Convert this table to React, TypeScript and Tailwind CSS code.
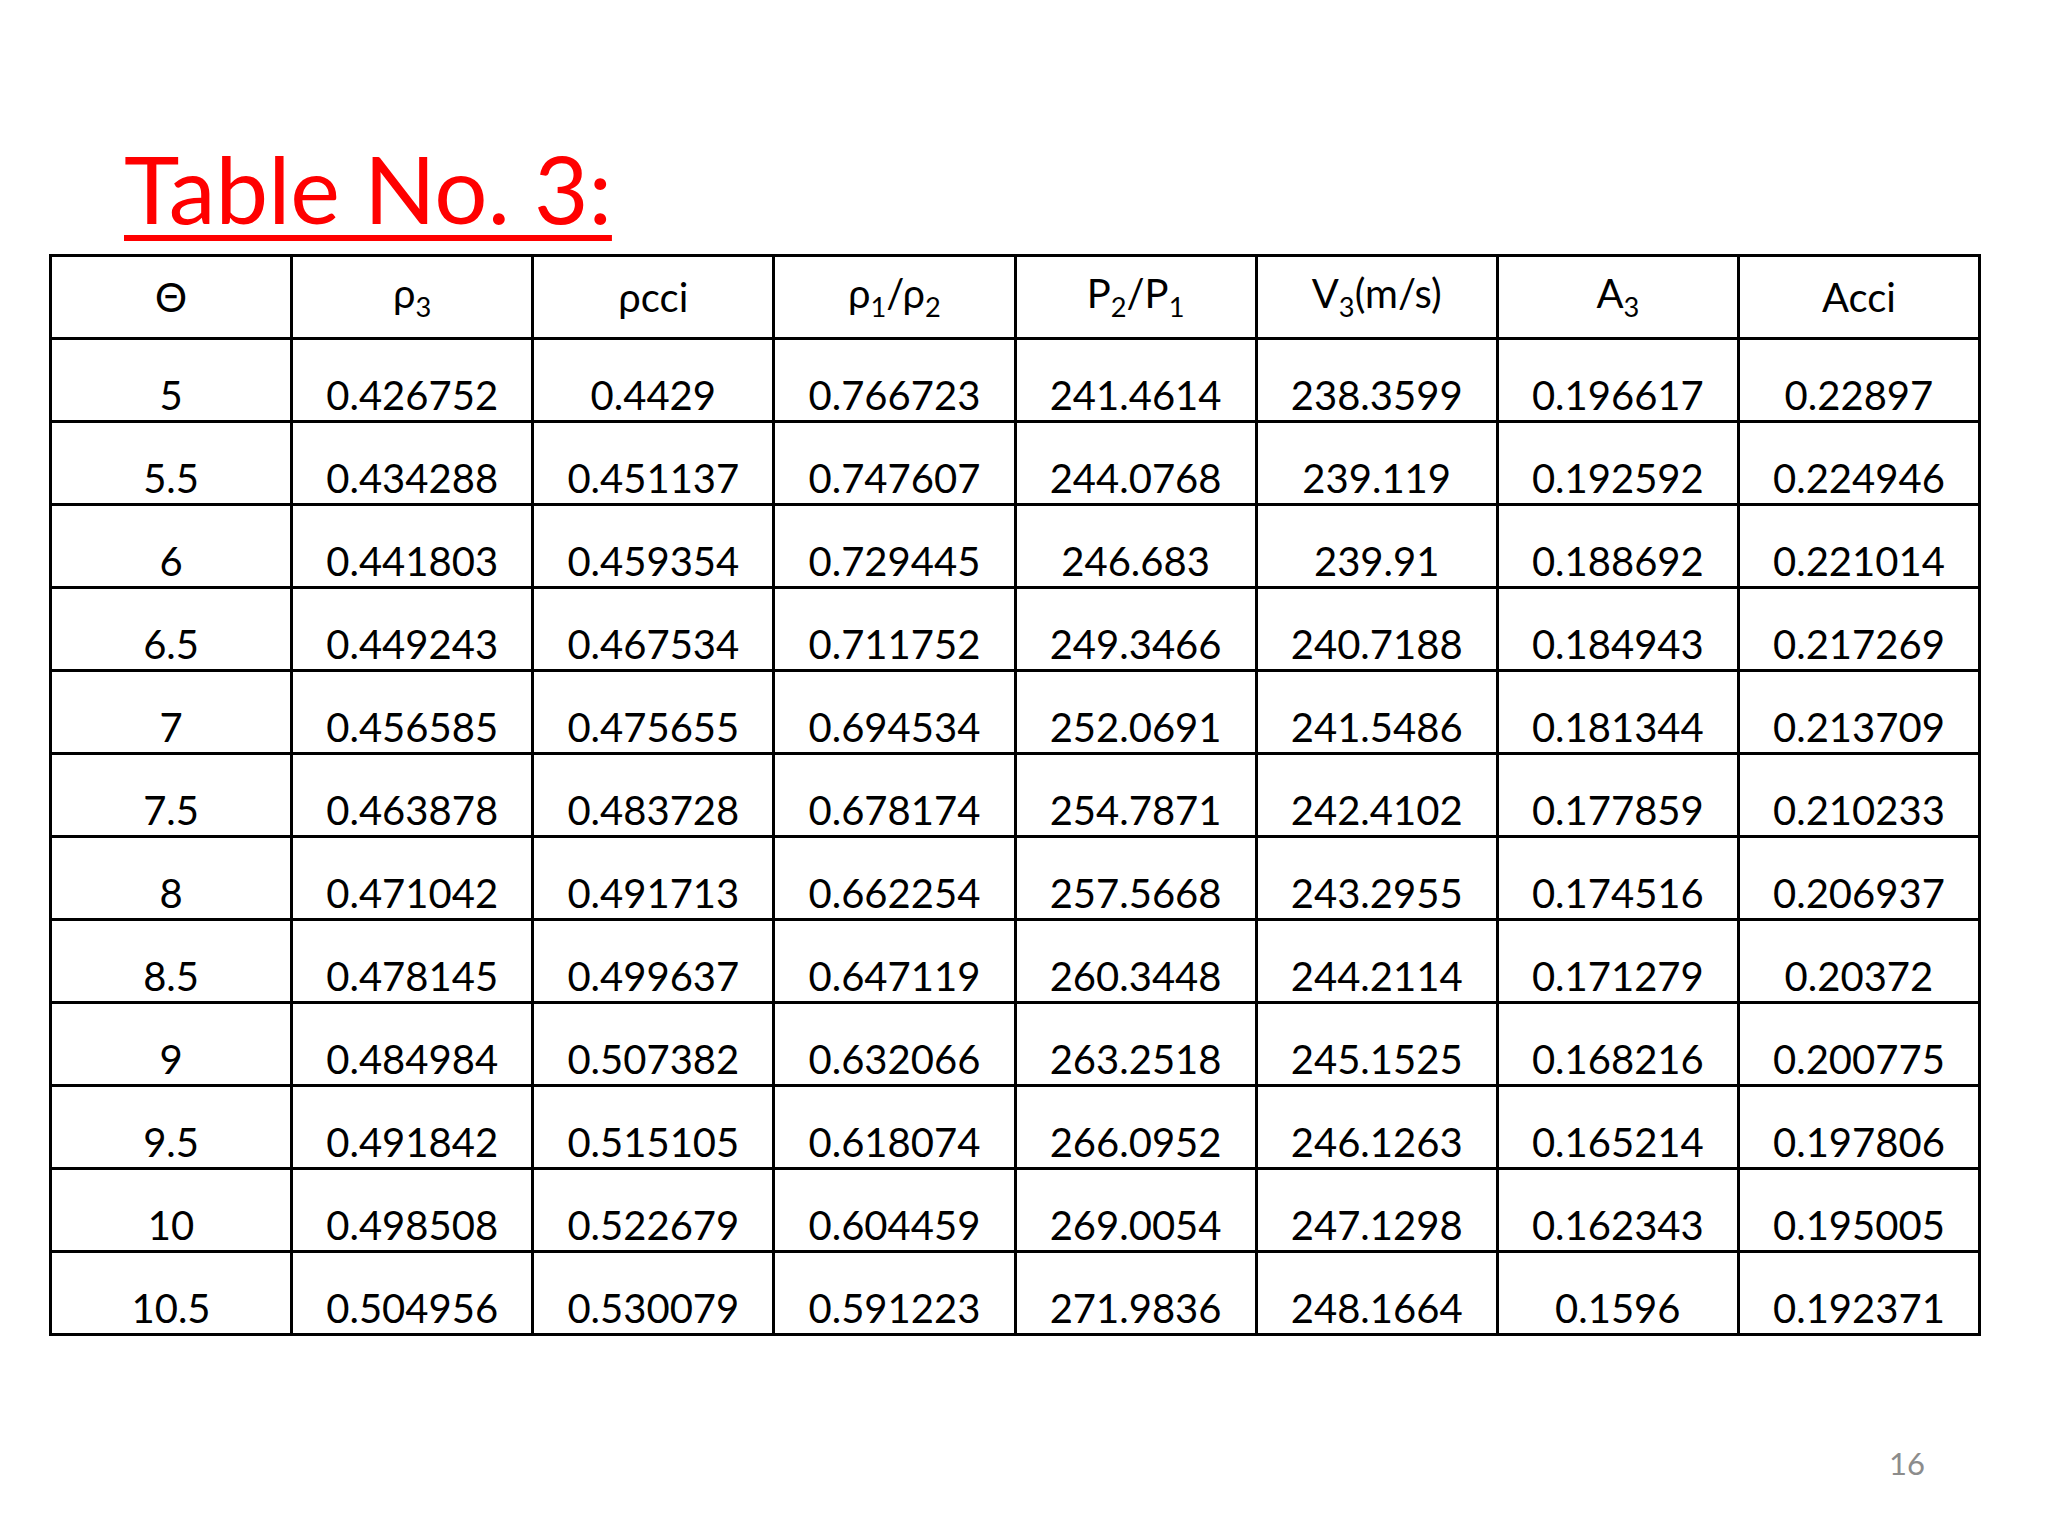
const sub = (d: string) => <span className="text-[0.68em] align-sub">{d}</span>;

const header: React.ReactNode[] = [
  "Θ",
  <>ρ{sub("3")}</>,
  "ρcci",
  <>ρ{sub("1")}/ρ{sub("2")}</>,
  <>P{sub("2")}/P{sub("1")}</>,
  <>V{sub("3")}(m/s)</>,
  <>A{sub("3")}</>,
  "Acci",
];

const rows: string[][] = [
  ["5", "0.426752", "0.4429", "0.766723", "241.4614", "238.3599", "0.196617", "0.22897"],
  ["5.5", "0.434288", "0.451137", "0.747607", "244.0768", "239.119", "0.192592", "0.224946"],
  ["6", "0.441803", "0.459354", "0.729445", "246.683", "239.91", "0.188692", "0.221014"],
  ["6.5", "0.449243", "0.467534", "0.711752", "249.3466", "240.7188", "0.184943", "0.217269"],
  ["7", "0.456585", "0.475655", "0.694534", "252.0691", "241.5486", "0.181344", "0.213709"],
  ["7.5", "0.463878", "0.483728", "0.678174", "254.7871", "242.4102", "0.177859", "0.210233"],
  ["8", "0.471042", "0.491713", "0.662254", "257.5668", "243.2955", "0.174516", "0.206937"],
  ["8.5", "0.478145", "0.499637", "0.647119", "260.3448", "244.2114", "0.171279", "0.20372"],
  ["9", "0.484984", "0.507382", "0.632066", "263.2518", "245.1525", "0.168216", "0.200775"],
  ["9.5", "0.491842", "0.515105", "0.618074", "266.0952", "246.1263", "0.165214", "0.197806"],
  ["10", "0.498508", "0.522679", "0.604459", "269.0054", "247.1298", "0.162343", "0.195005"],
  ["10.5", "0.504956", "0.530079", "0.591223", "271.9836", "248.1664", "0.1596", "0.192371"],
];

export default function App() {
  return (
    <div className="w-[2048px] h-[1536px] bg-white flex flex-col font-['Lato','Noto_Sans',sans-serif] text-black">
      <div className="pt-[141px] pl-[124px]">
        <h1 className="text-[94px] leading-none text-[#ff0000] underline decoration-[6px] underline-offset-[11px]">
          Table No. 3:
        </h1>
      </div>

      <div className="mt-[19px] pl-[49px]">
        <table className="w-[1932px] table-fixed border-collapse text-[40px] leading-none">
          <thead>
            <tr className="h-[83px]">
              {header.map((h, i) => (
                <th key={i} className="border-[3px] border-black font-normal text-center align-middle">
                  {h}
                </th>
              ))}
            </tr>
          </thead>
          <tbody>
            {rows.map((r) => (
              <tr key={r[0]} className="h-[83px]">
                {r.map((v, i) => (
                  <td key={i} className="border-[3px] border-black text-center align-bottom pb-[5px]">
                    {v}
                  </td>
                ))}
              </tr>
            ))}
          </tbody>
        </table>
      </div>

      <div className="mt-auto flex justify-end pr-[123px] pb-[57px]">
        <span className="text-[31px] leading-none text-[#8c8c8c]">16</span>
      </div>
    </div>
  );
}
